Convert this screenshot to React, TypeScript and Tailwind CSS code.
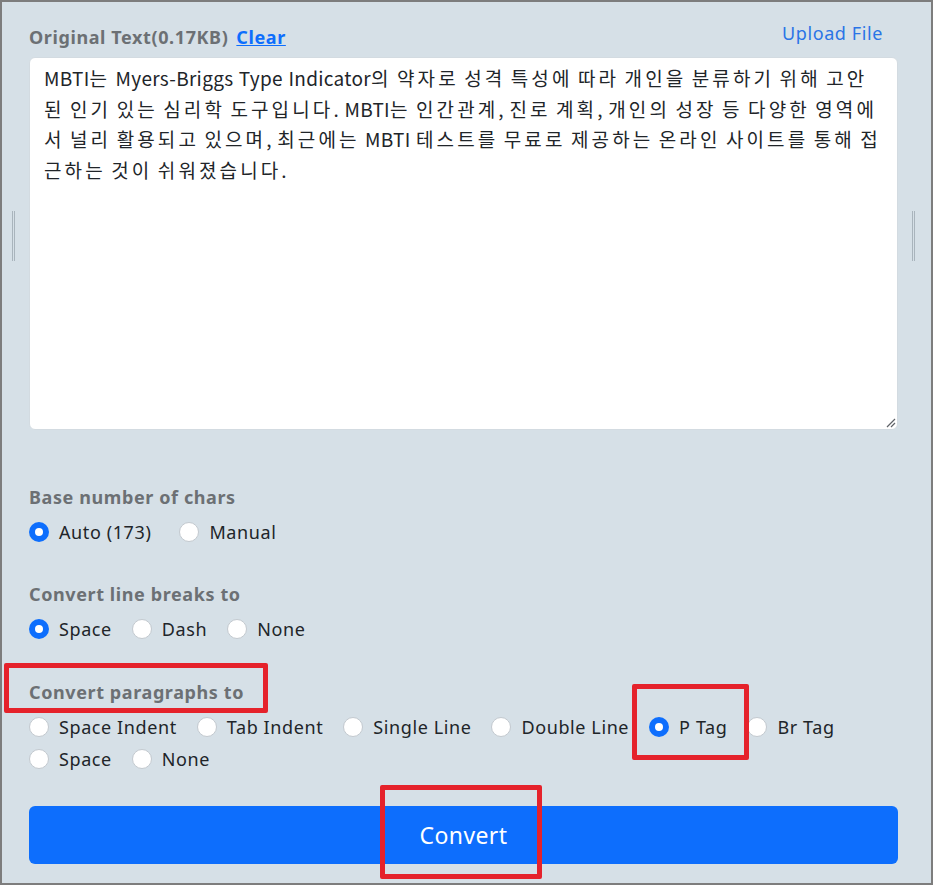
import React from "react";

const TEXT =
  "MBTI는 Myers-Briggs Type Indicator의 약자로 성격 특성에 따라 개인을 분류하기 위해 고안된 인기 있는 심리학 도구입니다. MBTI는 인간관계, 진로 계획, 개인의 성장 등 다양한 영역에서 널리 활용되고 있으며, 최근에는 MBTI 테스트를 무료로 제공하는 온라인 사이트를 통해 접근하는 것이 쉬워졌습니다.";

function Runs({ text }: { text: string }) {
  const parts = text.split(/([가-힣\s]+)/).filter((p) => p.length > 0);
  return (
    <>
      {parts.map((p, i) =>
        /^[가-힣\s]+$/.test(p) ? (
          <span key={i} className="tracking-[3.1px] [word-spacing:-1.9px]">
            {p}
          </span>
        ) : (
          <span key={i} className="tracking-[0.3px] [word-spacing:0.9px]">
            {p}
          </span>
        )
      )}
    </>
  );
}

function Radio({
  label,
  checked = false,
  wide = false,
}: {
  label: string;
  checked?: boolean;
  wide?: boolean;
}) {
  return (
    <label className={wide ? "flex items-center h-[32px] mr-[28px] cursor-pointer" : "flex items-center h-[32px] mr-[20px] cursor-pointer"}>
      {checked ? (
        <span className="w-[20px] h-[20px] rounded-full bg-[#0d6efd] flex items-center justify-center shrink-0">
          <span className="w-[8px] h-[8px] rounded-full bg-white" />
        </span>
      ) : (
        <span className="w-[20px] h-[20px] rounded-full bg-white border border-[#c3c9cf] shrink-0" />
      )}
      <span className="ml-[10px] text-[18px] tracking-[0.6px] text-[#212529] leading-[32px]">{label}</span>
    </label>
  );
}

function Heading({ children }: { children: React.ReactNode }) {
  return (
    <div className="text-[18px] font-bold tracking-[0.6px] text-[#6c7074] leading-[24px]">{children}</div>
  );
}

export default function App() {
  return (
    <div className="relative w-[933px] h-[885px] box-border bg-[#d6e0e7] border-2 border-[#7d7d7d] pl-[27px] pr-[33px] pt-[23px] [font-family:'Noto_Sans','Noto_Sans_CJK_KR',sans-serif]">
      <div className="flex justify-between items-end mb-[8px] h-[24px]">
        <div className="text-[18px] font-bold tracking-[0.6px] text-[#6c7074] leading-[24px]">
          Original Text(0.17KB)
          <a className="ml-[8px] text-[#0d6efd] underline cursor-pointer">Clear</a>
        </div>
        <a className="text-[18px] tracking-[0.6px] text-[#2a74e6] leading-[24px] mr-[15px] relative top-[-4px] cursor-pointer">
          Upload File
        </a>
      </div>

      <div className="relative w-full h-[373px] box-border bg-white rounded-[6px] border border-[#d3dbe1] pl-[14px] pr-[14px] pt-[5px] text-[19px] leading-[30.5px] text-[#212529] [font-family:'Noto_Sans_CJK_KR',sans-serif]">
        <Runs text={TEXT} />
        <svg className="absolute right-[1px] bottom-[1px]" width="12" height="12" viewBox="0 0 12 12">
          <path d="M11 3 L3 11 M11 7 L7 11" stroke="#5f6368" strokeWidth="1.2" />
        </svg>
      </div>

      <div className="mt-[55px]">
        <Heading>Base number of chars</Heading>
        <div className="flex flex-wrap mt-[7px]">
          <Radio label="Auto (173)" checked wide />
          <Radio label="Manual" />
        </div>
      </div>

      <div className="mt-[34px]">
        <Heading>Convert line breaks to</Heading>
        <div className="flex flex-wrap mt-[7px]">
          <Radio label="Space" checked />
          <Radio label="Dash" />
          <Radio label="None" />
        </div>
      </div>

      <div className="mt-[35px]">
        <Heading>Convert paragraphs to</Heading>
        <div className="flex flex-wrap mt-[7px]">
          <Radio label="Space Indent" />
          <Radio label="Tab Indent" />
          <Radio label="Single Line" />
          <Radio label="Double Line" />
          <Radio label="P Tag" checked />
          <Radio label="Br Tag" />
          <Radio label="Space" />
          <Radio label="None" />
        </div>
      </div>

      <button className="mt-[31px] w-full h-[58px] rounded-[6px] bg-[#0d6efd] text-white text-[23px] tracking-[0.4px]">
        Convert
      </button>

      <div className="absolute left-[10px] top-[209px] w-[3px] h-[50px] border-x border-[#a9b4bc]" />
      <div className="absolute left-[910px] top-[209px] w-[3px] h-[50px] border-x border-[#a9b4bc]" />

      <div className="absolute left-[2px] top-[661px] w-[264px] h-[50px] border-[5px] border-[#e5222b] rounded-[2px] pointer-events-none" />
      <div className="absolute left-[630px] top-[682px] w-[117px] h-[76px] border-[5px] border-[#e5222b] rounded-[2px] pointer-events-none" />
      <div className="absolute left-[378px] top-[783px] w-[162px] h-[94px] border-[5px] border-[#e5222b] rounded-[2px] pointer-events-none" />
    </div>
  );
}
